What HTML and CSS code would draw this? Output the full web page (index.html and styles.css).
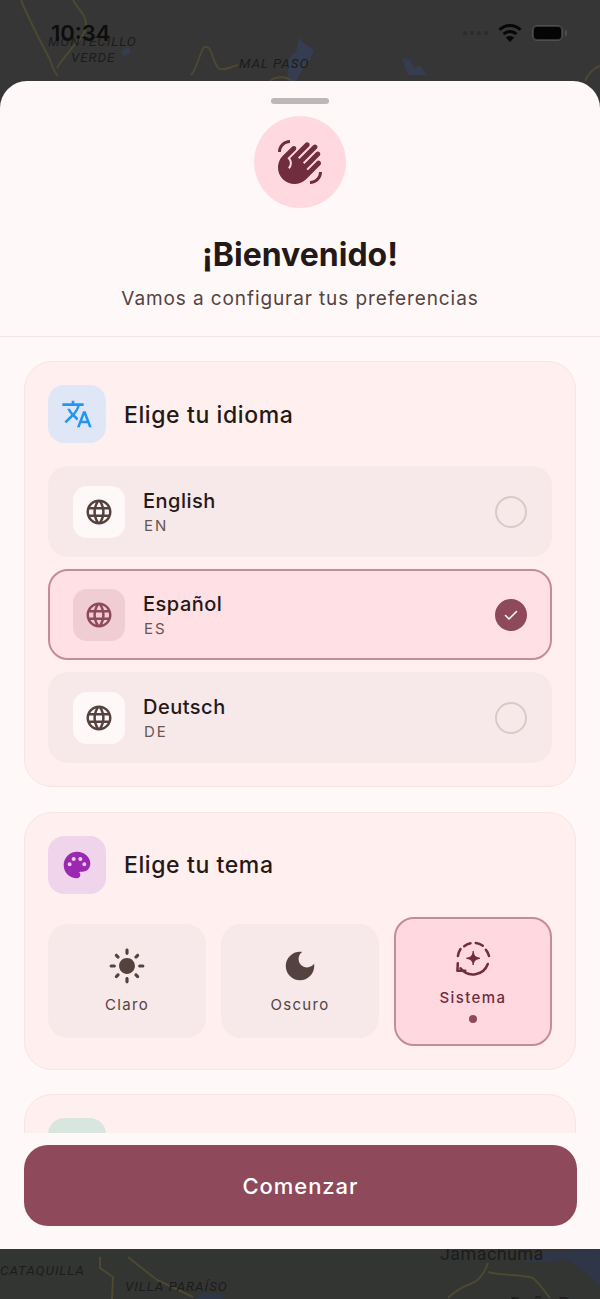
FILE: index.html
```html
<!DOCTYPE html>
<html lang="es">

<head>
    <meta charset="UTF-8">
    <meta name="viewport" content="width=device-width, initial-scale=1.0">
    <title>Bienvenido</title>
    <link rel="stylesheet" href="styles.css">
</head>

<body>
    <!-- map behind the sheet -->
    <div class="map">
        <svg class="map-lines" width="600" height="1299" viewBox="0 0 600 1299" fill="none">
            <g fill="#363d50">
                <path d="M287 81 L289 58 L296 52 L299 38 L305 44 L314 50 L310 60 L302 70 L296 81 Z" />
                <path d="M402 58 L410 60 L414 68 L420 66 L427 75 L408 75 Z" />
                <path d="M120 52 L128 47 L131 52 L124 56 Z" />
            </g>
            <g fill="#2f3648">
                <path d="M520 1262 L545 1252 L600 1249 V1285 L590 1276 L566 1259 L550 1262 Z" />
                <path d="M197 1299 L201 1293 L220 1293 L223 1299 Z" />
            </g>
            <g stroke="#4d4830" stroke-width="2">
                <path d="M21 0 C30 22 42 44 50 60 C52 66 54 72 58 76" />
                <path d="M73 0 C78 10 86 14 86 24 C86 36 78 40 72 48 C66 56 60 62 57 68" />
                <path d="M191 75 C198 68 200 48 205 47 C212 45 212 60 218 68 C224 72 232 66 238 65" />
                <path d="M270 81 C276 76 286 76 292 81" />
                <path d="M600 66 C594 68 588 74 585 81" />
                <path d="M100 1257 L100 1268 L113 1277 L112 1299" />
                <path d="M128 1257 L157 1280 L193 1297" />
                <path d="M488 1263 C484 1274 478 1282 470 1284 C460 1288 452 1294 448 1298" />
                <path d="M488 1272 C504 1276 520 1274 533 1278 C540 1284 545 1292 550 1298" />
            </g>
        </svg>
        <span class="map-label label-montecillo">MONTECILLO</span>
        <span class="map-label label-verde">VERDE</span>
        <span class="map-label label-malpaso">MAL PASO</span>
        <span class="map-label label-cataquilla">CATAQUILLA</span>
        <span class="map-label label-paraiso">VILLA PARAÍSO</span>
        <span class="map-town label-jamachuma">Jamachuma</span>
        <span class="map-town label-dona">Doña Pepa</span>
    </div>

    <div class="status-bar">
        <span class="status-time">10:34</span>
        <div class="status-icons">
            <span class="signal-dots"><i></i><i></i><i></i><i></i></span>
            <svg width="24" height="18" viewBox="0 0 24 18" fill="none" stroke="#070707" stroke-width="3">
                <path d="M1.500 5.800 A15 15 0 0 1 22.500 5.800" />
                <path d="M5.600 10 A9.500 9.500 0 0 1 18.400 10" />
                <path d="M12 18 L7.800 13.600 A6 6 0 0 1 16.200 13.600 Z" fill="#070707" stroke="none" />
            </svg>
            <span class="battery"><i class="battery-fill"></i></span>
        </div>
    </div>

    <div class="sheet">
        <div class="sheet-head">
            <div class="handle"></div>
            <div class="wave-circle">
                <svg width="48" height="48" viewBox="0 0 24 24" fill="#6f2d3e">
                    <path d="M23 17c0 3.310-2.690 6-6 6v-1.500c2.480 0 4.500-2.020 4.500-4.500H23zM1 7c0-3.310 2.690-6 6-6v1.500C4.520 2.500 2.500 4.520 2.500 7H1zm7.010-2.680l-4.600 4.600c-3.220 3.220-3.220 8.450 0 11.670s8.450 3.220 11.670 0l7.070-7.070c.49-.49.49-1.280 0-1.770a1.250 1.250 0 00-1.770 0l-4.420 4.420-.71-.71 6.540-6.540c.49-.49.49-1.280 0-1.770s-1.280-.49-1.770 0l-5.830 5.830-.71-.71 6.890-6.890c.49-.49.49-1.280 0-1.770s-1.280-.49-1.770 0l-6.890 6.890-.71-.71 5.480-5.480c.49-.49.49-1.280 0-1.770s-1.280-.49-1.770 0l-7.620 7.620a4 4 0 01-.33 5.280l-.71-.71c1.170-1.170 1.170-3.070 0-4.240l-.35-.35 4.070-4.070c.49-.49.49-1.280 0-1.770-.48-.48-1.270-.48-1.760.01z" />
                </svg>
            </div>
            <h1 class="welcome-title">¡Bienvenido!</h1>
            <p class="welcome-sub">Vamos a configurar tus preferencias</p>
        </div>

        <div class="sheet-scroll">
            <section class="card">
                <div class="card-head">
                    <div class="card-icon icon-blue">
                        <svg width="32" height="32" viewBox="0 0 24 24" fill="#2196f3">
                            <path d="M12.870 15.070l-2.540-2.510.03-.03c1.740-1.940 2.980-4.170 3.710-6.530H17V4h-7V2H8v2H1v1.990h11.170C11.500 7.920 10.440 9.750 9 11.350 8.070 10.320 7.300 9.190 6.690 8h-2c.73 1.630 1.730 3.170 2.980 4.560l-5.090 5.020L4 19l5-5 3.110 3.110.76-2.040zM18.500 10h-2L12 22h2l1.120-3h4.750L21 22h2l-4.500-12zm-2.620 7l1.620-4.330L19.120 17h-3.240z" />
                        </svg>
                    </div>
                    <h2 class="card-title">Elige tu idioma</h2>
                </div>
                <div class="lang-list">
                    <div class="lang-row">
                        <div class="lang-icon">
                            <svg class="globe" width="30" height="30" viewBox="0 0 24 24">
                                <use href="#globe-path" />
                            </svg>
                        </div>
                        <div class="lang-text">
                            <span class="lang-name">English</span>
                            <span class="lang-code">EN</span>
                        </div>
                        <span class="radio"></span>
                    </div>
                    <div class="lang-row selected">
                        <div class="lang-icon">
                            <svg class="globe" width="30" height="30" viewBox="0 0 24 24">
                                <use href="#globe-path" />
                            </svg>
                        </div>
                        <div class="lang-text">
                            <span class="lang-name">Español</span>
                            <span class="lang-code">ES</span>
                        </div>
                        <span class="radio">
                            <svg width="16" height="16" viewBox="0 0 16 16" fill="none" stroke="#fff" stroke-width="1.500" stroke-linecap="round" stroke-linejoin="round">
                                <path d="M2.500 8.500 L6 12 L13.500 4.500" />
                            </svg>
                        </span>
                    </div>
                    <div class="lang-row">
                        <div class="lang-icon">
                            <svg class="globe" width="30" height="30" viewBox="0 0 24 24">
                                <use href="#globe-path" />
                            </svg>
                        </div>
                        <div class="lang-text">
                            <span class="lang-name">Deutsch</span>
                            <span class="lang-code">DE</span>
                        </div>
                        <span class="radio"></span>
                    </div>
                </div>
            </section>

            <section class="card">
                <div class="card-head">
                    <div class="card-icon icon-purple">
                        <svg width="32" height="32" viewBox="0 0 24 24" fill="#9c27b0">
                            <path d="M12 2C6.490 2 2 6.490 2 12s4.490 10 10 10c1.380 0 2.500-1.120 2.500-2.500 0-.61-.23-1.200-.64-1.670-.08-.1-.13-.21-.13-.33 0-.28.22-.5.5-.5H16c3.310 0 6-2.690 6-6 0-4.960-4.490-9-10-9zm-5.500 11c-.83 0-1.500-.67-1.500-1.500S5.670 10 6.500 10s1.500.67 1.500 1.500S7.330 13 6.500 13zm3-4C8.670 9 8 8.330 8 7.500S8.670 6 9.500 6s1.500.67 1.500 1.500S10.330 9 9.500 9zm5 0c-.83 0-1.500-.67-1.500-1.500S13.670 6 14.500 6s1.500.67 1.500 1.500S15.330 9 14.500 9zm3 4c-.83 0-1.500-.67-1.500-1.500s.67-1.500 1.500-1.500 1.500.67 1.500 1.500-.67 1.500-1.500 1.500z" />
                        </svg>
                    </div>
                    <h2 class="card-title">Elige tu tema</h2>
                </div>
                <div class="theme-grid">
                    <div class="theme-tile">
                        <svg width="38" height="38" viewBox="0 0 24 24" fill="#54423f">
                            <path d="M12 7c-2.760 0-5 2.240-5 5s2.240 5 5 5 5-2.240 5-5-2.240-5-5-5zM2 13h2c.55 0 1-.45 1-1s-.45-1-1-1H2c-.55 0-1 .45-1 1s.45 1 1 1zm18 0h2c.55 0 1-.45 1-1s-.45-1-1-1h-2c-.55 0-1 .45-1 1s.45 1 1 1zM11 2v2c0 .55.45 1 1 1s1-.45 1-1V2c0-.55-.45-1-1-1s-1 .45-1 1zm0 18v2c0 .55.45 1 1 1s1-.45 1-1v-2c0-.55-.45-1-1-1s-1 .45-1 1zM5.990 4.580c-.39-.39-1.030-.39-1.410 0-.39.39-.39 1.030 0 1.410l1.060 1.060c.39.39 1.030.39 1.410 0s.39-1.030 0-1.410L5.990 4.580zm12.370 12.370c-.39-.39-1.030-.39-1.410 0-.39.39-.39 1.030 0 1.410l1.060 1.060c.39.39 1.030.39 1.410 0 .39-.39.39-1.030 0-1.410l-1.060-1.060zm1.060-10.960c.39-.39.39-1.030 0-1.410-.39-.39-1.030-.39-1.410 0l-1.060 1.060c-.39.39-.39 1.030 0 1.410s1.030.39 1.410 0l1.060-1.060zM7.050 18.360c.39-.39.39-1.030 0-1.410-.39-.39-1.030-.39-1.410 0l-1.060 1.060c-.39.39-.39 1.030 0 1.410s1.030.39 1.410 0l1.060-1.060z" />
                        </svg>
                        <span class="theme-label">Claro</span>
                    </div>
                    <div class="theme-tile">
                        <svg width="38" height="38" viewBox="0 0 24 24" fill="#54423f">
                            <path d="M12 3c-4.970 0-9 4.030-9 9s4.030 9 9 9 9-4.030 9-9c0-.46-.04-.92-.1-1.360-.98 1.370-2.580 2.260-4.400 2.260-2.980 0-5.400-2.420-5.400-5.400 0-1.810.89-3.420 2.260-4.400-.44-.06-.9-.1-1.360-.1z" />
                        </svg>
                        <span class="theme-label">Oscuro</span>
                    </div>
                    <div class="theme-tile selected">
                        <svg width="38" height="38" viewBox="0 0 38 38" fill="none" stroke="#6f2d3e" stroke-width="2.500" stroke-linecap="round" stroke-linejoin="round">
                            <path d="M3.900 16 C4.300 13.400 5.200 11 6.500 9" />
                            <path d="M10.200 6.200 C12 4.700 14.200 3.700 16.500 3.200" />
                            <path d="M21.800 2.900 C24.300 3.200 26.700 4.200 28.800 5.800" />
                            <path d="M31.900 9.800 C33.500 11.600 34.500 13.700 35 16" />
                            <path d="M33.800 24 A15.800 15.800 0 0 1 6.500 28.300" />
                            <path d="M3.800 23.300 L3.400 30.700 L11.300 30.700" />
                            <path d="M19.200 11.600 C19.900 15.900 21 17.200 25.900 18.300 C21 19.400 19.900 20.700 19.200 25 C18.500 20.700 17.400 19.400 12.500 18.300 C17.400 17.200 18.500 15.900 19.200 11.600 Z" fill="#6f2d3e" stroke-width="1" />
                        </svg>
                        <span class="theme-label">Sistema</span>
                        <span class="theme-dot"></span>
                    </div>
                </div>
            </section>

            <section class="card">
                <div class="card-head">
                    <div class="card-icon icon-green"></div>
                </div>
            </section>
        </div>

        <div class="sheet-foot">
            <button class="start-btn">Comenzar</button>
        </div>
    </div>

    <svg class="svg-defs" width="0" height="0">
        <defs>
            <path id="globe-path" d="M11.990 2C6.470 2 2 6.480 2 12s4.470 10 9.990 10C17.520 22 22 17.520 22 12S17.520 2 11.990 2zm6.930 6h-2.950c-.32-1.250-.78-2.450-1.380-3.560 1.840.63 3.370 1.910 4.330 3.560zM12 4.040c.83 1.200 1.480 2.530 1.910 3.960h-3.820c.43-1.430 1.080-2.760 1.910-3.960zM4.260 14C4.100 13.360 4 12.690 4 12s.1-1.360.26-2h3.380c-.08.66-.14 1.320-.14 2 0 .68.06 1.340.14 2H4.260zm.82 2h2.950c.32 1.250.78 2.450 1.380 3.560-1.840-.63-3.370-1.900-4.330-3.560zm2.950-8H5.080c.96-1.660 2.490-2.930 4.330-3.560C8.810 5.550 8.350 6.750 8.030 8zM12 19.960c-.83-1.200-1.480-2.530-1.910-3.960h3.820c-.43 1.430-1.080 2.760-1.910 3.960zM14.340 14H9.660c-.09-.66-.16-1.320-.16-2 0-.68.07-1.350.16-2h4.680c.09.65.16 1.320.16 2 0 .68-.07 1.340-.16 2zm.25 5.560c.6-1.110 1.060-2.310 1.380-3.560h2.950c-.96 1.650-2.490 2.930-4.330 3.560zM16.360 14c.08-.66.14-1.320.14-2 0-.68-.06-1.340-.14-2h3.380c.16.64.26 1.310.26 2s-.1 1.360-.26 2h-3.380z" />
        </defs>
    </svg>
</body>

</html>
```

FILE: styles.css
```css
* {
    box-sizing: border-box;
}

body {
    font-family: Inter, "Noto Sans", sans-serif;
    background: linear-gradient(#363636, #333533);
    margin: 0;
    padding: 0;
    height: 1299px;
    position: relative;
    overflow: hidden;
    color: #231918;
}

.svg-defs {
    position: absolute;
}

/* map */
.map {
    position: absolute;
    inset: 0;
}

.map-lines {
    position: absolute;
    top: 0;
    left: 0;
}

.map-label {
    position: absolute;
    font-family: Roboto, sans-serif;
    font-style: italic;
    font-size: 13.500px;
    line-height: 18px;
    letter-spacing: .9px;
    color: #1c1c1c;
    white-space: nowrap;
}

.map-town {
    position: absolute;
    font-family: Roboto, sans-serif;
    font-size: 18px;
    line-height: 22px;
    letter-spacing: .4px;
    color: #1c1c1c;
    white-space: nowrap;
}

.label-montecillo { left: 48px; top: 32px; }
.label-verde { left: 71px; top: 48px; }
.label-malpaso { left: 239px; top: 54px; }
.label-cataquilla { left: 0; top: 1261px; }
.label-paraiso { left: 125px; top: 1277px; }
.label-jamachuma { left: 440px; top: 1243px; }
.label-dona { left: 510px; top: 1293px; }

/* status bar */
.status-bar {
    position: relative;
    height: 81px;
    padding: 21px 37px 0 51px;
    display: flex;
    justify-content: space-between;
    align-items: flex-start;
}

.status-time {
    font-size: 22px;
    line-height: 24px;
    font-weight: 600;
    color: #0d0d0d;
}

.status-icons {
    display: flex;
    align-items: center;
    gap: 10px;
    height: 24px;
}

.signal-dots {
    display: flex;
    gap: 3px;
}

.signal-dots i {
    width: 4px;
    height: 4px;
    border-radius: 50%;
    background-color: #2c2c2c;
}

.battery {
    position: relative;
    width: 31px;
    height: 16px;
    border: 1px solid #4f4f4f;
    border-radius: 5px;
    padding: 1px;
    display: flex;
}

.battery::after {
    content: "";
    position: absolute;
    right: -5px;
    top: 4px;
    width: 2px;
    height: 6px;
    border-radius: 0 2px 2px 0;
    background-color: #4f4f4f;
}

.battery-fill {
    flex: 1;
    border-radius: 3px;
    background-color: #050505;
}

/* sheet */
.sheet {
    position: relative;
    height: 1168px;
    background-color: #fff8f8;
    border-radius: 27px 27px 0 0;
    display: flex;
    flex-direction: column;
    overflow: hidden;
}

.sheet-head {
    height: 256px;
    padding-top: 17px;
    border-bottom: 1px solid #f1e6e5;
    display: flex;
    flex-direction: column;
    align-items: center;
    flex-shrink: 0;
}

.handle {
    width: 58px;
    height: 6px;
    border-radius: 3px;
    background-color: #bdb8b7;
}

.wave-circle {
    width: 92px;
    height: 92px;
    margin-top: 12px;
    border-radius: 50%;
    background-color: #ffd9df;
    display: flex;
    align-items: center;
    justify-content: center;
}

.welcome-title {
    margin: 27px 0 0;
    font-size: 32px;
    line-height: 40px;
    font-weight: 700;
}

.welcome-sub {
    margin: 12px 0 0;
    font-size: 19px;
    line-height: 24px;
    letter-spacing: .9px;
    color: #534341;
}

.sheet-scroll {
    flex: 1;
    min-height: 0;
    overflow: hidden;
    padding: 24px 24px 0;
    display: flex;
    flex-direction: column;
    gap: 24.500px;
}

.card {
    background-color: #fff0ef;
    border: 1px solid #f8e4e2;
    border-radius: 28px;
    padding: 23px;
    flex-shrink: 0;
}

.card-head {
    display: flex;
    align-items: center;
    gap: 18px;
}

.card-icon {
    width: 58px;
    height: 58px;
    border-radius: 16px;
    display: flex;
    align-items: center;
    justify-content: center;
    flex-shrink: 0;
}

.icon-blue { background-color: #dfe6f5; }
.icon-purple { background-color: #efd4ec; }
.icon-green { background-color: #d9e6e0; }

.card-title {
    margin: 0;
    padding-top: 1px;
    font-size: 23px;
    font-weight: 500;
    letter-spacing: .6px;
}

/* language rows */
.lang-list {
    margin-top: 23px;
    display: flex;
    flex-direction: column;
    gap: 12px;
}

.lang-row {
    height: 91px;
    padding: 0 25px;
    border-radius: 20px;
    background-color: #f7e8e9;
    display: flex;
    align-items: center;
}

.lang-row.selected {
    background-color: #ffe0e5;
    border: 2px solid #c48b98;
    padding: 0 23px;
}

.lang-icon {
    width: 52px;
    height: 52px;
    border-radius: 14px;
    background-color: #fff8f8;
    display: flex;
    align-items: center;
    justify-content: center;
    flex-shrink: 0;
}

.lang-row.selected .lang-icon {
    background-color: #efcdd3;
}

.globe {
    fill: #54423f;
}

.lang-row.selected .globe {
    fill: #8e4a5b;
}

.lang-text {
    flex: 1;
    margin-left: 18px;
    display: flex;
    flex-direction: column;
    gap: 2px;
}

.lang-name {
    font-size: 20px;
    line-height: 26px;
    font-weight: 500;
    letter-spacing: .5px;
}

.lang-code {
    font-size: 15px;
    line-height: 20px;
    letter-spacing: 2px;
    color: #665654;
    margin-left: 1px;
}

.radio {
    width: 32px;
    height: 32px;
    border: 2.500px solid #d9c9c8;
    border-radius: 50%;
    display: flex;
    align-items: center;
    justify-content: center;
}

.lang-row.selected .radio {
    background-color: #8e4a5b;
    border-color: #8e4a5b;
}

/* theme tiles */
.theme-grid {
    margin-top: 23px;
    display: grid;
    grid-template-columns: repeat(3, 158px);
    gap: 15px;
    align-items: center;
}

.theme-tile {
    height: 114px;
    padding-top: 23px;
    border-radius: 20px;
    background-color: #f7e8e9;
    display: flex;
    flex-direction: column;
    align-items: center;
    gap: 10px;
}

.theme-tile.selected {
    height: 129px;
    padding-top: 21px;
    border: 2px solid #c48b98;
    background-color: #ffd9df;
}

.theme-label {
    font-size: 15px;
    line-height: 20px;
    letter-spacing: 1.300px;
    color: #54423f;
}

.selected .theme-label {
    font-weight: 500;
    letter-spacing: 1.400px;
    color: #6f2d3e;
}

.theme-dot {
    width: 8px;
    height: 8px;
    margin-top: -3px;
    border-radius: 50%;
    background-color: #8e4a5b;
}

/* footer */
.sheet-foot {
    height: 116px;
    padding: 12px 23px 23px 24px;
    background-color: #fff8f8;
    flex-shrink: 0;
}

.start-btn {
    width: 100%;
    height: 81px;
    border: none;
    border-radius: 24px;
    background-color: #8e4a5b;
    color: #fff;
    font-family: inherit;
    font-size: 22px;
    font-weight: 500;
    letter-spacing: .95px;
}
```
